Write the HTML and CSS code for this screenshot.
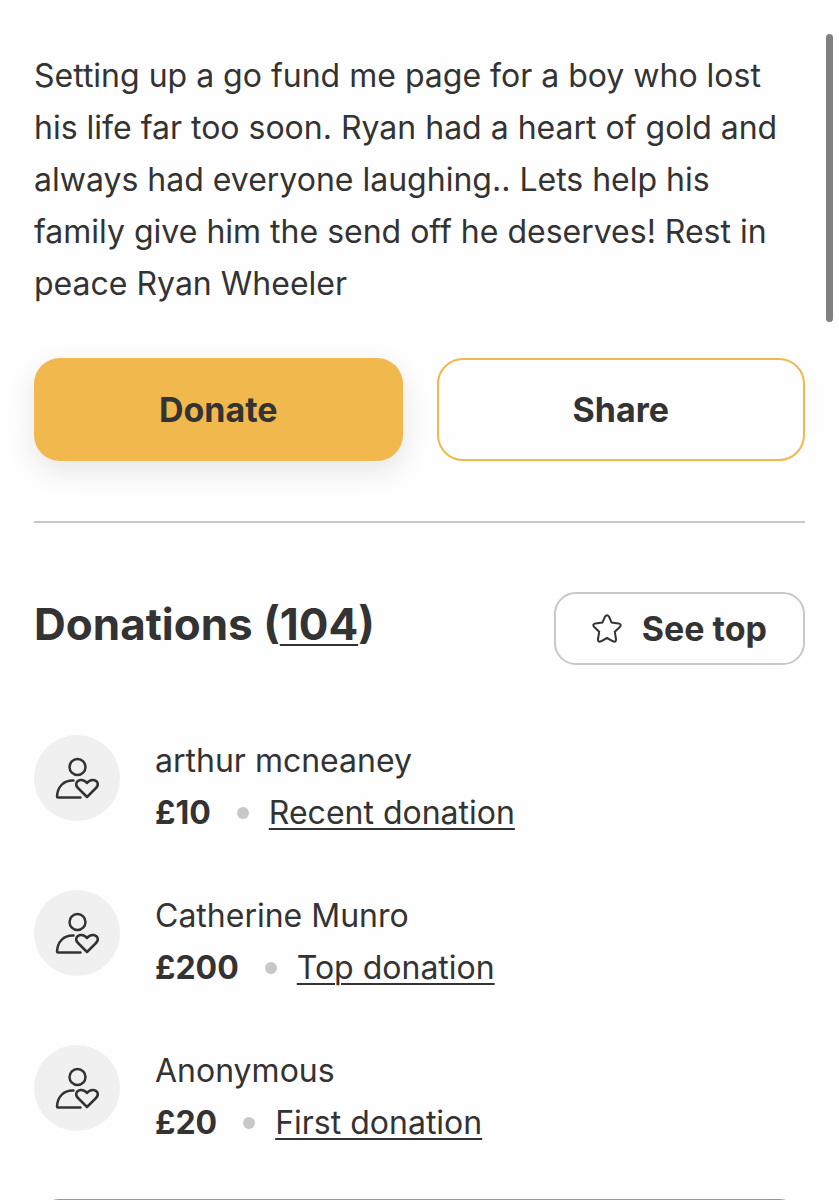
FILE: index.html
```html
<!DOCTYPE html>
<html lang="en">

<head>
    <meta charset="UTF-8">
    <meta name="viewport" content="width=device-width, initial-scale=1.0">
    <title>Ryan Wheeler fundraiser</title>
    <link rel="stylesheet" href="styles.css">
</head>

<body>
    <!-- shared icon shapes -->
    <svg class="sprite" aria-hidden="true">
        <symbol id="icon-donor" viewBox="0 0 86 86">
            <circle cx="43.5" cy="32" r="8"/>
            <path d="M39.500 45.5C29.500 45 23.500 52 23 61.5Q23 62.500 24 62.500H46.500"/>
            <path d="M53 62L44 53C40.500 49.500 42.500 45.500 46.500 45C49.500 44.700 51.500 46 53 48C54.500 46 56.500 44.700 59.500 45C63.500 45.500 65.500 49.500 62 53Z"/>
        </symbol>
    </svg>

    <main class="page">
        <p class="story">Setting up a go fund me page for a boy who lost his life far too soon. Ryan had a heart of gold and always had everyone laughing.. Lets help his family give him the send off he deserves! Rest in peace Ryan Wheeler</p>

        <div class="actions">
            <button type="button" class="btn btn-donate">Donate</button>
            <button type="button" class="btn btn-share">Share</button>
        </div>

        <section class="donations">
            <div class="donations-head">
                <h2>Donations (<a href="#donations">104</a>)</h2>
                <button type="button" class="see-top">
                    <svg class="star" viewBox="0 0 30 30" aria-hidden="true">
                        <path d="M13 2.600Q15 -.2 17 2.600L19.600 8.600L26.500 9.400Q30 10.200 27.800 13L22.800 17.800L24 25Q24.200 28.600 21 27.300L15 24L9 27.300Q5.800 28.600 6 25L7.200 17.800L2.200 13Q0 10.200 3.500 9.400L10.400 8.600Z"/>
                    </svg>
                    See top
                </button>
            </div>

            <ul class="donation-list" id="donations">
                <li class="donation">
                    <svg class="avatar" aria-hidden="true"><use href="#icon-donor"/></svg>
                    <div>
                        <div class="name">arthur mcneaney</div>
                        <div class="meta"><b>£10</b><span class="dot"></span><a href="#recent">Recent donation</a></div>
                    </div>
                </li>
                <li class="donation">
                    <svg class="avatar" aria-hidden="true"><use href="#icon-donor"/></svg>
                    <div>
                        <div class="name">Catherine Munro</div>
                        <div class="meta"><b>£200</b><span class="dot"></span><a href="#top">Top donation</a></div>
                    </div>
                </li>
                <li class="donation">
                    <svg class="avatar" aria-hidden="true"><use href="#icon-donor"/></svg>
                    <div>
                        <div class="name">Anonymous</div>
                        <div class="meta"><b>£20</b><span class="dot"></span><a href="#first">First donation</a></div>
                    </div>
                </li>
            </ul>
        </section>

        <div class="notice"></div>
    </main>
    <div class="scroll-thumb"></div>
</body>

</html>
```

FILE: styles.css
```css
* {
    box-sizing: border-box;
}

body {
    margin: 0;
    height: 100vh;
    overflow: hidden;
    background-color: #fefefe;
    color: #333;
    font-family: "Inter", "Liberation Sans", sans-serif;
    font-size: 32px;
    line-height: 52px;
}

a {
    color: inherit;
    text-decoration-thickness: 2px;
    text-underline-offset: 4px;
}

button {
    color: inherit;
    font: inherit;
    font-size: 34px;
    font-weight: 700;
    cursor: pointer;
}

.sprite {
    display: none;
}

.page {
    padding: 50px 34px 0;
}

.story {
    margin: 0;
}

.actions {
    display: grid;
    grid-template-columns: 1fr 1fr;
    gap: 34px;
    padding: 48px 0 60px;
    border-bottom: 2px solid #c8c8c8;
}

.btn {
    height: 103px;
    border-radius: 26px;
}

.btn-donate {
    background-color: #f1b84e;
    border: none;
    box-shadow: 0 10px 30px rgba(0, 0, 0, 0.1);
}

.btn-share {
    background-color: #fefefe;
    border: 2px solid #f1b84e;
}

.donations-head {
    display: flex;
    justify-content: space-between;
    padding: 69px 0 70px;
}

h2 {
    margin: 0;
    padding-top: 2px;
    font-size: 44px;
    line-height: 60px;
}

.see-top {
    display: flex;
    align-items: center;
    gap: 20px;
    height: 73px;
    padding: 0 36px;
    background-color: #fefefe;
    border: 2px solid #c8c8c8;
    border-radius: 22px;
}

.star {
    width: 30px;
    height: 30px;
    fill: none;
    stroke: #333;
    stroke-width: 2;
    stroke-linejoin: round;
}

.donation-list {
    display: grid;
    gap: 51px;
    margin: 0;
    padding: 0;
    list-style: none;
}

.donation {
    display: flex;
    gap: 35px;
}

.avatar {
    width: 86px;
    height: 86px;
    border-radius: 50%;
    background-color: #f0f0f0;
    fill: none;
    stroke: #333;
    stroke-width: 2.500;
    stroke-linecap: round;
    stroke-linejoin: round;
}

.meta {
    display: flex;
    align-items: center;
}

.dot {
    width: 12px;
    height: 12px;
    margin: 0 20px 0 26px;
    border-radius: 50%;
    background-color: #c8c8c8;
}

.notice {
    height: 120px;
    margin-top: 50px;
    border: 2px solid #5cba80;
    border-radius: 26px;
}

/* sits over the page like a phone scroll indicator */
.scroll-thumb {
    position: absolute;
    top: 34px;
    right: 6px;
    width: 7px;
    height: 288px;
    border-radius: 4px;
    background-color: #808080;
}
```
